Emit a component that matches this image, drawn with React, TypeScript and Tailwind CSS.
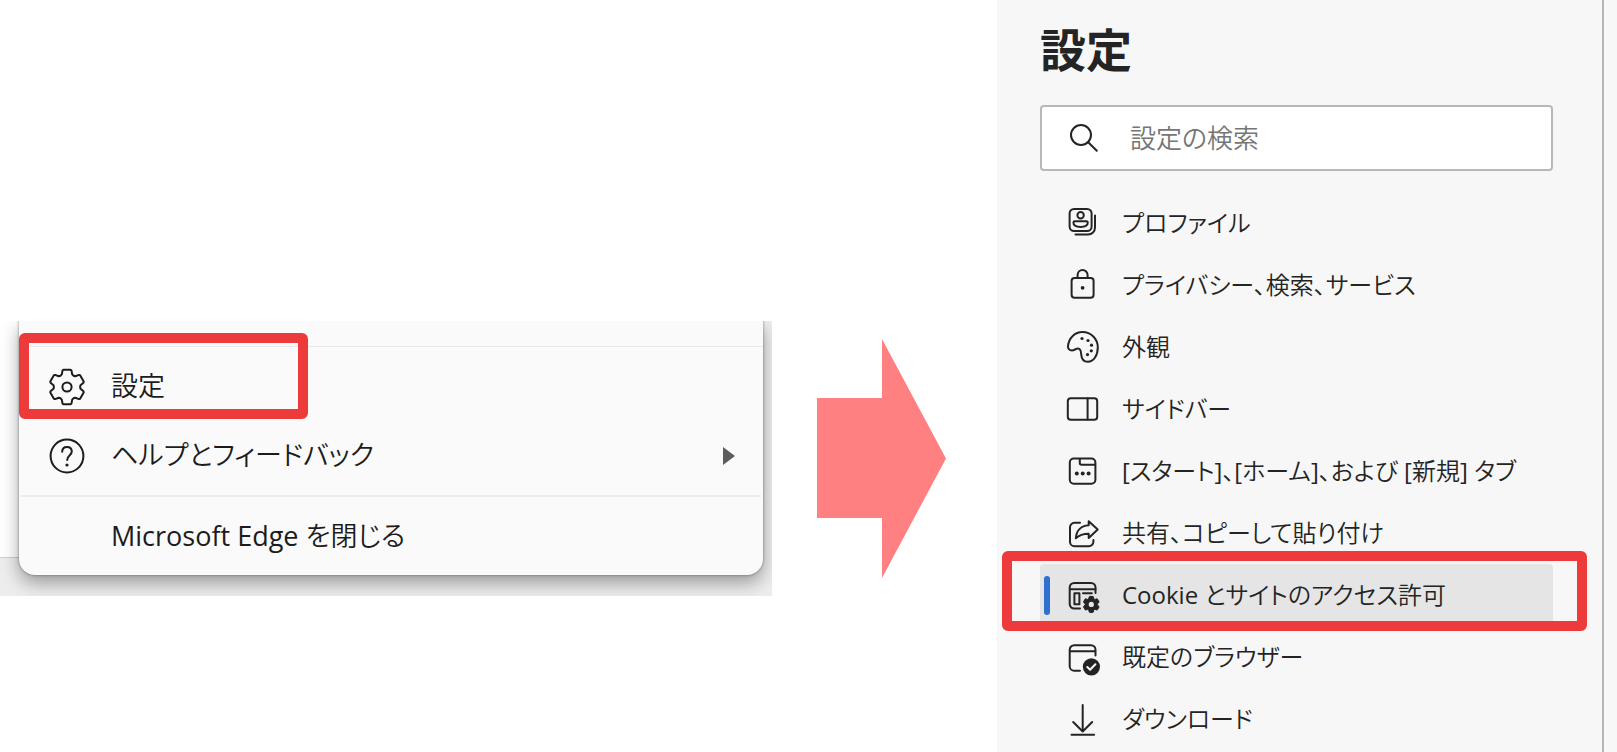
import type { ReactNode } from 'react';

// Outline of a six-toothed gear around the origin, scaled to the given radius
const gearPath = (radius: number) => {
  const tooth = [
    [-6.6, -11.2],
    [-5.2, -12.6],
    [-4.5, -16.4],
    [-3.6, -17.2],
    [3.6, -17.2],
    [4.5, -16.4],
    [5.2, -12.6],
    [6.6, -11.2],
  ];
  const points: string[] = [];
  for (let i = 0; i < 6; i++) {
    const a = (i * Math.PI) / 3;
    for (const [x, y] of tooth) {
      const px = ((x * Math.cos(a) - y * Math.sin(a)) * radius) / 17.2;
      const py = ((x * Math.sin(a) + y * Math.cos(a)) * radius) / 17.2;
      points.push(`${px.toFixed(2)} ${py.toFixed(2)}`);
    }
  }
  return `M${points.join('L')}Z`;
};

const Icon = ({ children }: { children: ReactNode }) => (
  <svg
    viewBox="0 0 32 32"
    className="w-8 h-8 shrink-0 overflow-visible"
    fill="none"
    stroke="currentColor"
    strokeWidth="2"
    strokeLinecap="round"
    strokeLinejoin="round"
    aria-hidden="true"
  >
    {children}
  </svg>
);

const ProfileIcon = () => (
  <Icon>
    <rect x="2.6" y="2" width="22" height="22" rx="4.5" />
    <path d="M28 8.400V20.500c0 4-3 7-7 7H8.500" />
    <circle cx="13.600" cy="8.200" r="3.200" />
    <path d="M7.800 14.200h11.600c.9 0 1.400.6 1.400 1.400 0 2.600-2.400 4.400-7.200 4.400s-7.200-1.800-7.200-4.400c0-.8.5-1.400 1.400-1.400Z" />
  </Icon>
);

const LockIcon = () => (
  <Icon>
    <rect x="4.600" y="9" width="22" height="19.800" rx="3" />
    <path d="M10.600 9V6a5 5 0 0 1 10 0v3" />
    <circle cx="15.600" cy="18.800" r="1.900" fill="currentColor" stroke="none" />
  </Icon>
);

const PaletteIcon = () => (
  <Icon>
    <path d="M1 15C1.800 6.800 8 1 15.500 1c8.500 0 15.300 6.800 15.300 15.300 0 8-4 14.500-10 14.500-4.300 0-6.300-3-6.600-7.500-.2-3.500-.7-5.800-3.200-5.800-2.200 0-3.800 2-6 2C2.200 19.500.8 17.500 1 15Z" />
    <g fill="currentColor" stroke="none">
      <circle cx="15" cy="7.500" r="1.600" />
      <circle cx="21" cy="9.500" r="1.600" />
      <circle cx="24.500" cy="14.200" r="1.600" />
      <circle cx="24.300" cy="19.800" r="1.600" />
      <circle cx="20.500" cy="23.600" r="1.600" />
    </g>
  </Icon>
);

const SidebarIcon = () => (
  <Icon>
    <rect x="0.800" y="5.200" width="29.400" height="21.600" rx="3" />
    <path d="M20.600 5.500v21" />
  </Icon>
);

const TabIcon = () => (
  <Icon>
    <rect x="2.800" y="3.600" width="25.600" height="25.200" rx="4" />
    <path d="M12.800 4v4c0 1.200.6 1.800 1.800 1.800h13.500" />
    <g fill="currentColor" stroke="none">
      <circle cx="9.800" cy="18.600" r="2" />
      <circle cx="15.700" cy="18.600" r="2" />
      <circle cx="21.600" cy="18.600" r="2" />
    </g>
  </Icon>
);

const ShareIcon = () => (
  <Icon>
    <path d="M13 5.800H7.500A4.500 4.500 0 0 0 3 10.300v14.400a4.500 4.500 0 0 0 4.500 4.500h14.400a4.500 4.500 0 0 0 4.500-4.500V23" />
    <path d="M21.700 4.200l9 8.400-9 8.400v-4.300c-5.500 0-9.500 1.300-12.900 4.600.5-7.500 5-12.600 12.900-13.100Z" />
  </Icon>
);

const PermissionIcon = () => (
  <Icon>
    <path d="M28.500 14V8.500A4.500 4.500 0 0 0 24 4H7.200a4.500 4.500 0 0 0-4.500 4.500V25a4.500 4.500 0 0 0 4.500 4.500H13" />
    <path d="M3 10.200h25.500M16 14.200h8.800" />
    <rect x="7.400" y="14.200" width="5" height="11" />
    <g transform="translate(24.300 25.400)">
      <path d={gearPath(8)} fill="currentColor" strokeWidth="1" />
      <circle r="2.600" className="fill-[#e5e5e5]" stroke="none" />
    </g>
  </Icon>
);

const BrowserIcon = () => (
  <Icon>
    <path d="M28.500 14.500V8.700a4.500 4.500 0 0 0-4.500-4.500H7.200a4.500 4.500 0 0 0-4.500 4.500v16.500a4.500 4.500 0 0 0 4.500 4.500H13M3 10.200h25.500" />
    <circle cx="24.400" cy="25.800" r="8.600" fill="currentColor" stroke="none" />
    <path d="M20.300 26l2.800 2.700 5.300-5.400" className="stroke-[#f7f7f7]" />
  </Icon>
);

const DownloadIcon = () => (
  <Icon>
    <path d="M15.700 2v26M6.200 19l9.500 9.500 9.500-9.500M4.500 31.800h22.600" />
  </Icon>
);

const settings = [
  { id: 'profile', label: 'プロファイル', icon: <ProfileIcon /> },
  { id: 'privacy', label: 'プライバシー、検索、サービス', icon: <LockIcon /> },
  { id: 'appearance', label: '外観', icon: <PaletteIcon /> },
  { id: 'sidebar', label: 'サイドバー', icon: <SidebarIcon /> },
  { id: 'start', label: '[スタート]、[ホーム]、および [新規] タブ', icon: <TabIcon /> },
  { id: 'share', label: '共有、コピーして貼り付け', icon: <ShareIcon /> },
  { id: 'cookie', label: 'Cookie とサイトのアクセス許可', icon: <PermissionIcon /> },
  { id: 'browser', label: '既定のブラウザー', icon: <BrowserIcon /> },
  { id: 'download', label: 'ダウンロード', icon: <DownloadIcon /> },
];

const EdgeMenu = () => (
  <section className="relative overflow-hidden bg-[#ededed] pl-[19px] pr-[9px] pb-[21px]">
    {/* Browser page behind the menu */}
    <div className="absolute left-0 top-0 w-16 h-[237px] bg-white border-b border-[#d0d0d0]"></div>

    <div className="relative bg-[#fafafa] rounded-b-2xl text-[27px] text-[#1c1c1c] shadow-[0_0_2px_1px_rgba(0,0,0,0.2),0_8px_18px_rgba(0,0,0,0.35)]">
      <div className="h-[26px] border-b border-[#e8e8e8]"></div>

      <div className="py-[5px]">
        <div className="relative">
          <button className="w-full h-[69px] flex items-center gap-[25px] pl-[29px] text-left">
            <svg
              viewBox="-19 -19 38 38"
              className="w-[38px] h-[38px] shrink-0"
              fill="none"
              stroke="currentColor"
              strokeWidth="2"
              strokeLinejoin="round"
              aria-hidden="true"
            >
              <path d={gearPath(17.2)} />
              <circle r="4.600" />
            </svg>
            設定
          </button>
          <div className="absolute left-0 -top-[19px] w-[289px] h-[86px] border-10 border-[#ed3a3a] rounded-md pointer-events-none"></div>
        </div>

        <button className="w-full h-[69px] flex items-center gap-[25px] pl-[29px] pr-7 text-left">
          <svg
            viewBox="-19 -19 38 38"
            className="w-[38px] h-[38px] shrink-0"
            fill="none"
            stroke="currentColor"
            strokeWidth="2"
            strokeLinecap="round"
            aria-hidden="true"
          >
            <circle r="16.400" />
            <path d="M-4.800-4.200c0-3 2-4.800 4.800-4.800s4.800 1.800 4.800 4.600C4.800-.8.200-.6.200 4" />
            <circle cy="9" r="1.600" fill="currentColor" stroke="none" />
          </svg>
          <span className="flex-1">ヘルプとフィードバック</span>
          <svg viewBox="0 0 12 18" className="w-3 h-[18px] fill-[#5c5c5c]" aria-hidden="true">
            <path d="M0 0l12 9-12 9Z" />
          </svg>
        </button>
      </div>

      <div className="h-0.5 mx-0.5 bg-[#ececec]"></div>
      <button className="w-full h-[78px] pl-[92px] text-left">Microsoft Edge を閉じる</button>
    </div>
  </section>
);

const SettingsPanel = () => (
  <aside className="min-h-screen bg-[#f7f7f7] pr-[13px] text-[#242424]">
    <div className="min-h-screen border-r-2 border-[#b5b5b5] pl-[43px] pr-[49px] pt-[18px]">
      <h1 className="text-[46px] leading-[58px] font-bold font-['Noto_Sans_CJK_JP',sans-serif]">設定</h1>

      <label className="mt-[29px] h-[66px] flex items-center gap-[31px] pl-[27px] bg-white border-2 border-[#b8b8b8] rounded">
        <svg
          viewBox="0 0 30 30"
          className="w-[30px] h-[30px] shrink-0"
          fill="none"
          stroke="currentColor"
          strokeWidth="2"
          strokeLinecap="round"
          aria-hidden="true"
        >
          <circle cx="12" cy="12" r="10" />
          <path d="M19.200 19.200l8.600 8.600" />
        </svg>
        <input
          type="text"
          aria-label="設定の検索"
          placeholder="設定の検索"
          className="flex-1 min-w-0 bg-transparent outline-none text-[26px] placeholder:text-[#767676]"
        />
      </label>

      <nav className="mt-[21px] text-[24px]">
        {settings.map((item) => (
          <div key={item.id} className="relative">
            <a
              href={`#${item.id}`}
              className={`h-[62px] flex items-center rounded whitespace-nowrap ${
                item.id === 'cookie' ? 'bg-[#e5e5e5]' : ''
              }`}
            >
              <span
                className={`w-[6px] h-[39px] ml-1 mr-[17px] rounded-full ${
                  item.id === 'cookie' ? 'bg-[#2f6fd0]' : ''
                }`}
              ></span>
              {item.icon}
              <span className="ml-[23px]">{item.label}</span>
            </a>
            {item.id === 'cookie' && (
              <div className="absolute -left-[38px] -right-[34px] -top-[13px] h-20 border-10 border-[#ed3a3a] rounded-md pointer-events-none"></div>
            )}
          </div>
        ))}
      </nav>
    </div>
  </aside>
);

const App = () => {
  return (
    <main className="min-h-screen bg-white grid grid-cols-[772fr_225fr_620fr] items-start font-['Open_Sans','Noto_Sans_CJK_JP_DemiLight','Noto_Sans_CJK_JP',sans-serif] [font-feature-settings:'palt']">
      <div className="pt-[321px]">
        <EdgeMenu />
      </div>

      <div className="flex justify-center pt-[339px] pr-1.5">
        <svg viewBox="0 0 129 239" className="w-[129px] h-[239px] fill-[#ff8080]" aria-hidden="true">
          <path d="M0 59h65V0l64 119.500L65 239v-60H0Z" />
        </svg>
      </div>

      <SettingsPanel />
    </main>
  );
};

export default App;
